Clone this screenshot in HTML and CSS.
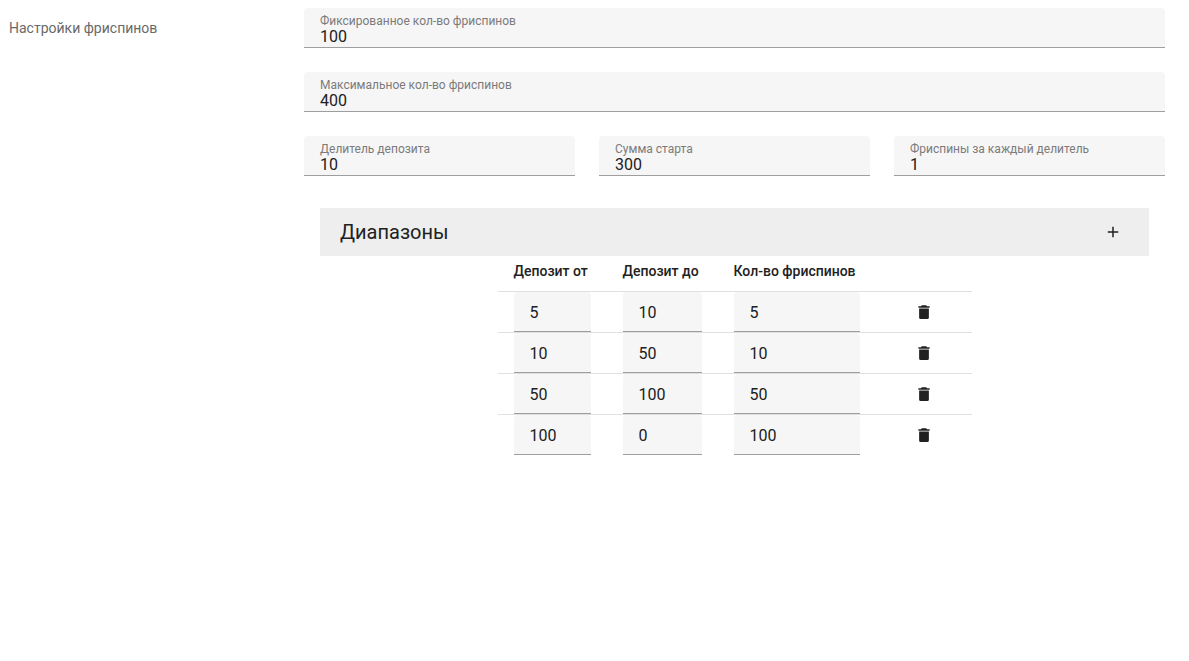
FILE: index.html
```html
<!DOCTYPE html>
<html lang="ru">
<head>
<meta charset="utf-8">
<meta name="viewport" content="width=device-width, initial-scale=1">
<title>Настройки фриспинов</title>
<link rel="stylesheet" href="styles.css">
</head>
<body>
<svg class="sprite" aria-hidden="true">
  <symbol id="trash" viewBox="0 0 24 24"><path d="M19.5 4.3H16l-1-1.3H9L8 4.3H4.5v2h15M5.5 7.3v12a2 2 0 0 0 2 2h9a2 2 0 0 0 2-2v-12z"/></symbol>
  <symbol id="plus" viewBox="0 0 24 24"><path d="M19 13h-6v6h-2v-6H5v-2h6V5h2v6h6v2z"/></symbol>
</svg>
<main class="settings">
  <h1 class="settings-title">Настройки фриспинов</h1>
  <form class="settings-form">
    <div class="field">
      <label class="field-label" for="fixed">Фиксированное кол-во фриспинов</label>
      <input class="field-input" id="fixed" type="text" value="100">
    </div>
    <div class="field">
      <label class="field-label" for="max">Максимальное кол-во фриспинов</label>
      <input class="field-input" id="max" type="text" value="400">
    </div>
    <div class="field-row">
      <div class="field">
        <label class="field-label" for="divider">Делитель депозита</label>
        <input class="field-input" id="divider" type="text" value="10">
      </div>
      <div class="field">
        <label class="field-label" for="start">Сумма старта</label>
        <input class="field-input" id="start" type="text" value="300">
      </div>
      <div class="field">
        <label class="field-label" for="per">Фриспины за каждый делитель</label>
        <input class="field-input" id="per" type="text" value="1">
      </div>
    </div>
    <section class="ranges">
      <header class="ranges-bar">
        <h2 class="ranges-title">Диапазоны</h2>
        <button class="icon-button" type="button" aria-label="Добавить"><svg class="icon"><use href="#plus"/></svg></button>
      </header>
      <table class="ranges-table">
        <colgroup><col class="col-from"><col class="col-to"><col class="col-count"><col></colgroup>
        <thead>
          <tr><th id="from">Депозит от</th><th id="to">Депозит до</th><th id="count">Кол-во фриспинов</th><td></td></tr>
        </thead>
        <tbody>
          <tr>
            <td><input class="cell-input" size="1" aria-labelledby="from" value="5"></td>
            <td><input class="cell-input" size="1" aria-labelledby="to" value="10"></td>
            <td><input class="cell-input" size="1" aria-labelledby="count" value="5"></td>
            <td><button class="icon-button" type="button" aria-label="Удалить"><svg class="icon"><use href="#trash"/></svg></button></td>
          </tr>
          <tr>
            <td><input class="cell-input" size="1" aria-labelledby="from" value="10"></td>
            <td><input class="cell-input" size="1" aria-labelledby="to" value="50"></td>
            <td><input class="cell-input" size="1" aria-labelledby="count" value="10"></td>
            <td><button class="icon-button" type="button" aria-label="Удалить"><svg class="icon"><use href="#trash"/></svg></button></td>
          </tr>
          <tr>
            <td><input class="cell-input" size="1" aria-labelledby="from" value="50"></td>
            <td><input class="cell-input" size="1" aria-labelledby="to" value="100"></td>
            <td><input class="cell-input" size="1" aria-labelledby="count" value="50"></td>
            <td><button class="icon-button" type="button" aria-label="Удалить"><svg class="icon"><use href="#trash"/></svg></button></td>
          </tr>
          <tr>
            <td><input class="cell-input" size="1" aria-labelledby="from" value="100"></td>
            <td><input class="cell-input" size="1" aria-labelledby="to" value="0"></td>
            <td><input class="cell-input" size="1" aria-labelledby="count" value="100"></td>
            <td><button class="icon-button" type="button" aria-label="Удалить"><svg class="icon"><use href="#trash"/></svg></button></td>
          </tr>
        </tbody>
      </table>
    </section>
  </form>
</main>
</body>
</html>
```
FILE: styles.css
```css
* {
  box-sizing: border-box;
}

body {
  margin: 0;
  background: #fff;
  color: #212121;
  font-family: Roboto, "Liberation Sans", sans-serif;
  font-size: 16px;
}

.sprite {
  display: none;
}

.settings {
  display: grid;
  grid-template-columns: repeat(12, minmax(0, 1fr));
  column-gap: 24px;
  padding: 8px 24px 8px 9px;
}

.settings-title {
  grid-column: span 3;
  margin: 0;
  color: #696969;
  font-size: 14px;
  font-weight: 400;
  line-height: 40px;
}

.settings-form {
  grid-column: span 9;
  display: flex;
  flex-direction: column;
  gap: 24px;
}

.field-row {
  display: grid;
  grid-template-columns: repeat(3, minmax(0, 1fr));
  gap: 24px;
}

.field {
  display: flex;
  flex-direction: column;
  height: 40px;
  padding: 5px 16px 0;
  border-bottom: 1px solid #9e9e9e;
  border-radius: 4px 4px 0 0;
  background: #f6f6f6;
}

.field-label {
  color: #7b7b7b;
  font-size: 12px;
  line-height: 16px;
}

.field-input,
.cell-input {
  display: block;
  width: 100%;
  border: 0;
  background: transparent;
  color: inherit;
  font: inherit;
}

.field-input {
  height: 14px;
  padding: 0;
}

.ranges {
  padding: 8px 16px;
}

.ranges-bar {
  display: flex;
  align-items: center;
  justify-content: space-between;
  height: 48px;
  padding: 0 4px 0 20px;
  background: #eee;
}

.ranges-title {
  margin: 0;
  font-size: 20px;
  font-weight: 400;
}

.ranges-table {
  margin: 0 auto;
  border-spacing: 0;
}

.col-from {
  width: 109px;
}

.col-to {
  width: 111px;
}

.col-count {
  width: 158px;
}

.ranges-table th,
.ranges-table td {
  padding: 0 16px;
}

.ranges-table th {
  height: 36px;
  padding-bottom: 5px;
  font-size: 14px;
  font-weight: 500;
  text-align: left;
  white-space: nowrap;
}

.ranges-table thead tr > *,
.ranges-table tbody tr:not(:last-child) > * {
  border-bottom: 1px solid #e0e0e0;
}

.cell-input {
  height: 40px;
  padding: 2px 16px 0;
  border-bottom: 1px solid #9e9e9e;
  border-radius: 4px 4px 0 0;
  background: #f6f6f6;
}

.icon-button {
  display: flex;
  align-items: center;
  justify-content: center;
  width: 64px;
  height: 36px;
  padding: 0;
  border: 0;
  background: transparent;
  color: inherit;
}

.icon {
  width: 18px;
  height: 18px;
  fill: currentColor;
}
```
